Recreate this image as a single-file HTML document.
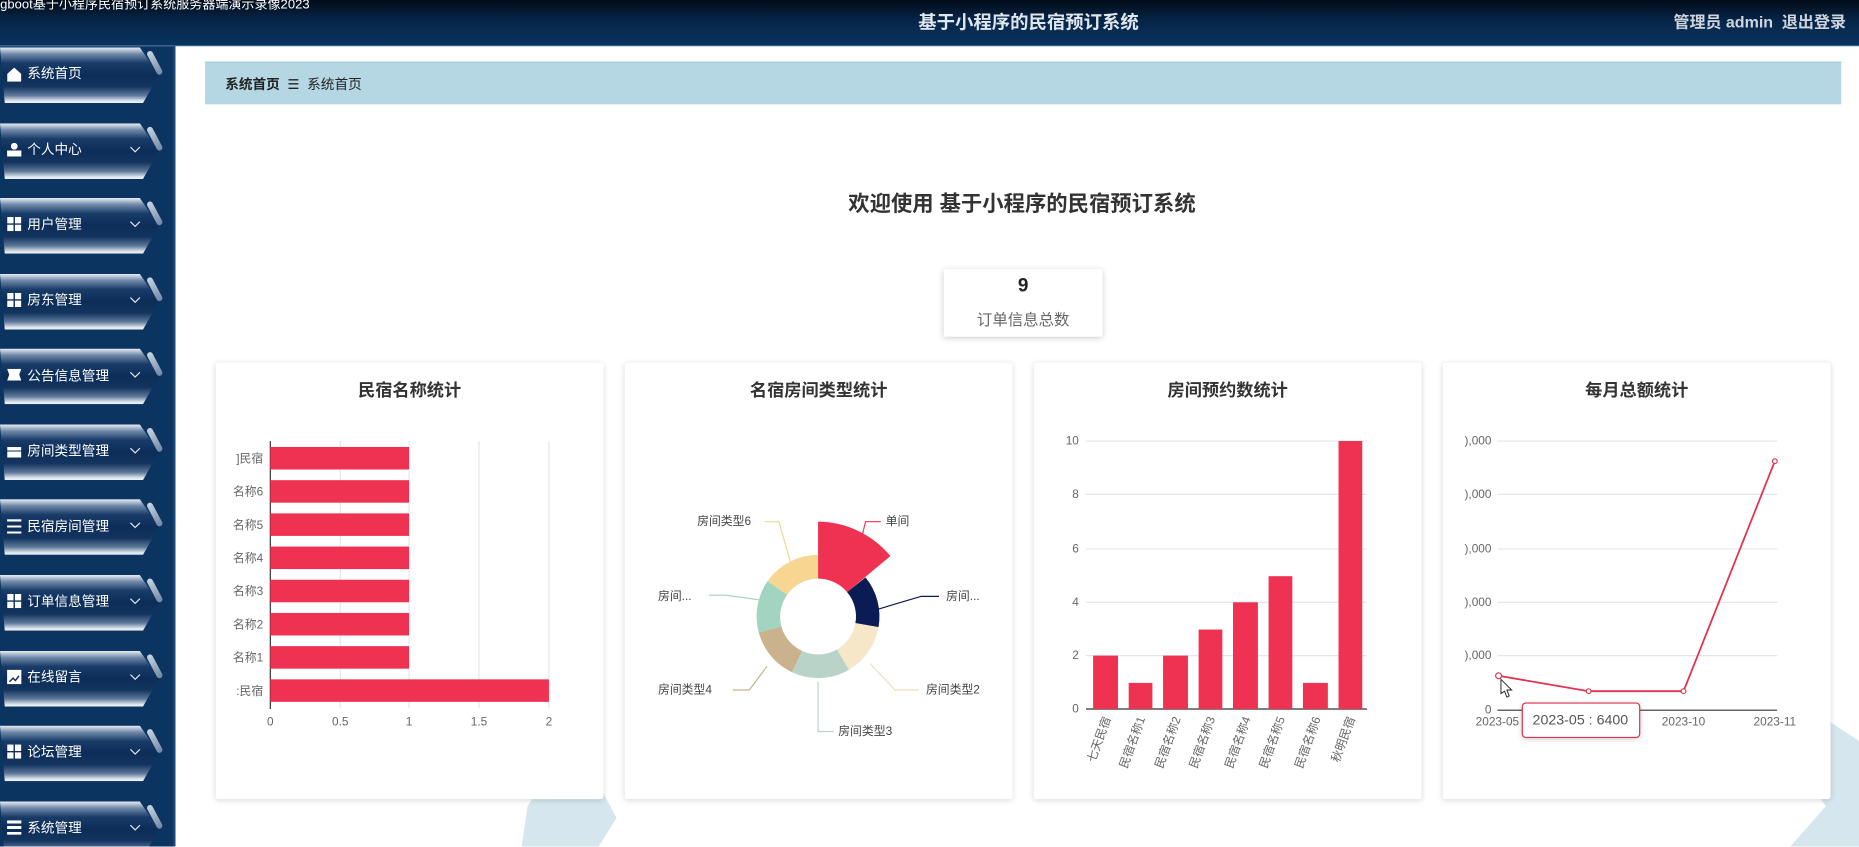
<!DOCTYPE html>
<html><head><meta charset="utf-8">
<style>
*{margin:0;padding:0;box-sizing:border-box}
html,body{width:1859px;height:846px;overflow:hidden;background:#fff}
body{font-family:"Liberation Sans","Noto Sans CJK SC",sans-serif}
#w{position:absolute;left:0;top:0;width:1568px;height:714px;transform:scale(1.18559);transform-origin:0 0;overflow:hidden;background:#fff}
.hdr{position:absolute;left:0;top:0;width:1568px;height:39px;background:linear-gradient(#020c18 0%,#062548 45%,#0a3360 100%);border-bottom:1px solid #2b5a8a}
.side{position:absolute;left:0;top:39px;width:148px;height:675px;background:#0b3460}
.it{position:absolute;left:0;width:134px;height:47px;clip-path:polygon(0 0,88% 0,100% 50%,90% 100%,3% 100%);background:linear-gradient(#e8eef4 0%,#6f88a8 12%,#183b68 28%,#0c2d58 50%,#12345f 70%,#5d7899 86%,#dfe6ee 96%,#f0f3f7 100%)}
.st{position:absolute;left:128px;width:5px;height:22px;border-radius:3px;background:linear-gradient(#c9d5e2,#6f88a6);transform:rotate(-28deg)}
.lb{position:absolute;left:23px;color:#fff;font-size:11.5px;line-height:14px;white-space:nowrap}
.ic{position:absolute;left:6px;width:12px;height:12px}
.g4{background:#fff;clip-path:polygon(0 0,45% 0,45% 45%,0 45%,0 55%,45% 55%,45% 100%,0 100%,0 0,100% 0,100% 100%,55% 100%,55% 55%,100% 55%,100% 45%,55% 45%,55% 0)}
.chev{position:absolute;left:110px;width:9px;height:6px}
.card{position:absolute;top:306px;width:327px;height:368px;background:#fff;box-shadow:0 1px 5px rgba(0,0,0,.15);border-radius:2px}
.ct{position:absolute;top:318px;width:327px;text-align:center;font-weight:bold;font-size:14.5px;color:#333}
</style></head><body><div id="w">
<svg style="position:absolute;left:0;top:0" width="1568" height="714">
<polygon points="445,680 470,640 500,652 520,690 505,714 440,714" fill="#d6e6ee"/>
<polygon points="1500,620 1530,600 1568,625 1568,714 1510,714 1540,680" fill="#d6e6ee"/>
</svg>
<div class="hdr">
<div style="position:absolute;left:-6px;top:-5px;color:#fff;font-size:11px;white-space:nowrap">ngboot基于小程序民宿预订系统服务器端演示录像2023</div>
<div style="position:absolute;left:0;width:1735px;text-align:center;top:7px;color:#dfe6ee;font-weight:bold;font-size:15.5px">基于小程序的民宿预订系统</div>
<div style="position:absolute;right:11px;top:7px;color:#cfd5dc;font-weight:bold;font-size:13.5px;white-space:nowrap">管理员 admin&nbsp; 退出登录</div>
</div>
<div class="side">
<div style="position:absolute;left:146px;top:0;width:2px;height:675px;background:#1a4878"></div>
</div>
<div style="position:absolute;left:0;top:0">
<div class="it" style="top:40px"></div><div class="st" style="top:42px"></div><div class="ic" style="top:57px;background:#fff;clip-path:polygon(50% 0,100% 45%,100% 100%,0 100%,0 45%)"></div><div class="lb" style="top:56px">系统首页</div>
<div class="it" style="top:104px"></div><div class="st" style="top:106px"></div><div class="ic" style="top:120px;background:radial-gradient(circle at 50% 28%,#fff 0 26%,transparent 28%),linear-gradient(transparent 58%,#fff 58%)"></div><div class="lb" style="top:120px">个人中心</div>
<div class="it" style="top:167px"></div><div class="st" style="top:169px"></div><div class="ic g4" style="top:183px"></div><div class="lb" style="top:183px">用户管理</div>
<div class="it" style="top:231px"></div><div class="st" style="top:233px"></div><div class="ic g4" style="top:247px"></div><div class="lb" style="top:247px">房东管理</div>
<div class="it" style="top:294px"></div><div class="st" style="top:296px"></div><div class="ic" style="top:311px;height:10px;background:#fff;clip-path:polygon(0 0,100% 0,85% 50%,100% 100%,0 100%,15% 50%)"></div><div class="lb" style="top:311px">公告信息管理</div>
<div class="it" style="top:358px"></div><div class="st" style="top:360px"></div><div class="ic" style="top:374px;background:linear-gradient(transparent 25%,#fff 25% 50%,transparent 50% 58%,#fff 58%);clip-path:polygon(30% 0,70% 0,70% 25%,100% 25%,100% 100%,0 100%,0 25%,30% 25%)"></div><div class="lb" style="top:374px">房间类型管理</div>
<div class="it" style="top:421px"></div><div class="st" style="top:423px"></div><div class="ic" style="top:438px;background:linear-gradient(#fff 0 15%,transparent 15% 42%,#fff 42% 57%,transparent 57% 85%,#fff 85%)"></div><div class="lb" style="top:438px">民宿房间管理</div>
<div class="it" style="top:485px"></div><div class="st" style="top:487px"></div><div class="ic g4" style="top:501px"></div><div class="lb" style="top:501px">订单信息管理</div>
<div class="it" style="top:549px"></div><div class="st" style="top:551px"></div><div class="ic" style="top:565px;background:#fff"><svg width="12" height="12"><polyline points="2,9 5,6 7,8 10,4" fill="none" stroke="#0c2d58" stroke-width="1.2"/></svg></div><div class="lb" style="top:565px">在线留言</div>
<div class="it" style="top:612px"></div><div class="st" style="top:614px"></div><div class="ic g4" style="top:628px"></div><div class="lb" style="top:628px">论坛管理</div>
<div class="it" style="top:676px"></div><div class="st" style="top:678px"></div><div class="ic" style="top:692px;background:linear-gradient(#fff 0 20%,transparent 20% 40%,#fff 40% 60%,transparent 60% 80%,#fff 80%)"></div><div class="lb" style="top:692px">系统管理</div>
<svg style="position:absolute;left:0;top:0" width="148" height="714" fill="none" stroke="#dfe7f0" stroke-width="1">
<polyline points="110,124 114,128 118,124"/><polyline points="110,187 114,191 118,187"/><polyline points="110,251 114,255 118,251"/><polyline points="110,314 114,318 118,314"/><polyline points="110,378 114,382 118,378"/><polyline points="110,441 114,445 118,441"/><polyline points="110,505 114,509 118,505"/><polyline points="110,569 114,573 118,569"/><polyline points="110,632 114,636 118,632"/><polyline points="110,696 114,700 118,696"/>
</svg>
</div>
<div style="position:absolute;left:173px;top:52px;width:1380px;height:36px;background:#b4d7e3;border-top:1px solid #a3cbd9"></div>
<div style="position:absolute;left:190px;top:63px;font-size:11.5px;color:#222;white-space:nowrap"><b>系统首页</b>&nbsp; ☰ &nbsp;系统首页</div>
<div style="position:absolute;left:148px;width:1428px;text-align:center;top:158px;font-size:18px;font-weight:bold;color:#333">欢迎使用 基于小程序的民宿预订系统</div>
<div style="position:absolute;left:796px;top:227px;width:134px;height:57px;background:#fff;box-shadow:0 1px 5px rgba(0,0,0,.2);text-align:center">
<div style="font-weight:bold;font-size:16px;color:#222;margin-top:6px">9</div>
<div style="font-size:13px;color:#666;margin-top:8px">订单信息总数</div></div>
<div class="card" style="left:182px"></div><div class="card" style="left:527px"></div><div class="card" style="left:872px"></div><div class="card" style="left:1217px"></div>
<div class="ct" style="left:182px">民宿名称统计</div><div class="ct" style="left:527px">名宿房间类型统计</div><div class="ct" style="left:872px">房间预约数统计</div><div class="ct" style="left:1217px">每月总额统计</div>
<svg style="position:absolute;left:0;top:0" width="1568" height="714" font-family="Liberation Sans,Noto Sans CJK SC,sans-serif" font-size="10" fill="#666">
<g stroke="#e0e6ee"><line x1="287" y1="372" x2="287" y2="597"/><line x1="345" y1="372" x2="345" y2="597"/><line x1="404" y1="372" x2="404" y2="597"/><line x1="463" y1="372" x2="463" y2="597"/></g>
<line x1="228" y1="372" x2="228" y2="598" stroke="#333"/>
<g fill="#ef3251"><rect x="228" y="377" width="117" height="19"/><rect x="228" y="405" width="117" height="19"/><rect x="228" y="433" width="117" height="19"/><rect x="228" y="461" width="117" height="19"/><rect x="228" y="489" width="117" height="19"/><rect x="228" y="517" width="117" height="19"/><rect x="228" y="545" width="117" height="19"/><rect x="228" y="573" width="235" height="19"/></g>
<g text-anchor="end"><text x="222" y="390">]民宿</text><text x="222" y="418">名称6</text><text x="222" y="446">名称5</text><text x="222" y="474">名称4</text><text x="222" y="502">名称3</text><text x="222" y="530">名称2</text><text x="222" y="558">名称1</text><text x="222" y="586">:民宿</text></g>
<g text-anchor="middle"><text x="228" y="612">0</text><text x="287" y="612">0.5</text><text x="345" y="612">1</text><text x="404" y="612">1.5</text><text x="463" y="612">2</text></g>
<g transform="translate(690,520)">
<path d="M0,-80 A80,80 0 0 1 61,-51 L24.5,-20.6 A32,32 0 0 0 0,-32Z" fill="#ef3251"/>
<path d="M40,-33 A52,52 0 0 1 51,9 L31.5,5.6 A32,32 0 0 0 24.5,-20.6Z" fill="#0b1c54"/>
<path d="M51,9 A52,52 0 0 1 26,45 L16,27.7 A32,32 0 0 0 31.5,5.6Z" fill="#f6e7c9"/>
<path d="M26,45 A52,52 0 0 1 -22,47 L-13.5,29 A32,32 0 0 0 16,27.7Z" fill="#b9d3c9"/>
<path d="M-22,47 A52,52 0 0 1 -50,13.5 L-31,8.3 A32,32 0 0 0 -13.5,29Z" fill="#c9b28c"/>
<path d="M-50,13.5 A52,52 0 0 1 -42.6,-29.8 L-26,-18.4 A32,32 0 0 0 -31,8.3Z" fill="#a1d4c1"/>
<path d="M-42.6,-29.8 A52,52 0 0 1 0,-52 L0,-32 A32,32 0 0 0 -26,-18.4Z" fill="#f6d690"/>
</g>
<g fill="none" stroke-width="1"><polyline points="724,466 730,440 743,440" stroke="#ef3251"/><polyline points="740,514 777,503 792,503" stroke="#0b1c54"/><polyline points="734,560 755,582 775,582" stroke="#f0e0bc"/><polyline points="690,575 690,617 703,617" stroke="#b9d3c9"/><polyline points="647,562 632,582 618,582" stroke="#c9b28c"/><polyline points="641,506 612,502 598,502" stroke="#a1d4c1"/><polyline points="667,475 657,440 645,440" stroke="#f6d690"/></g>
<g fill="#444"><text x="747" y="443">单间</text><text x="798" y="506">房间...</text><text x="781" y="585">房间类型2</text><text x="707" y="620">房间类型3</text><text x="555" y="585">房间类型4</text><text x="555" y="506">房间...</text><text x="588" y="443">房间类型6</text></g>
<g stroke="#e3e6ef"><line x1="916" y1="372" x2="1153" y2="372"/><line x1="916" y1="417" x2="1153" y2="417"/><line x1="916" y1="463" x2="1153" y2="463"/><line x1="916" y1="508" x2="1153" y2="508"/><line x1="916" y1="553" x2="1153" y2="553"/></g>
<line x1="916" y1="598" x2="1153" y2="598" stroke="#333"/>
<g fill="#ef3251"><rect x="922" y="553" width="21" height="45"/><rect x="952" y="576" width="20" height="22"/><rect x="981" y="553" width="21" height="45"/><rect x="1011" y="531" width="20" height="67"/><rect x="1040" y="508" width="21" height="90"/><rect x="1070" y="486" width="20" height="112"/><rect x="1099" y="576" width="21" height="22"/><rect x="1129" y="372" width="20" height="226"/></g>
<g text-anchor="end"><text x="910" y="375">10</text><text x="910" y="420">8</text><text x="910" y="466">6</text><text x="910" y="511">4</text><text x="910" y="556">2</text><text x="910" y="601">0</text></g>
<g text-anchor="end"><text transform="translate(937,606) rotate(-70)">七天民宿</text><text transform="translate(966,606) rotate(-70)">民宿名称1</text><text transform="translate(996,606) rotate(-70)">民宿名称2</text><text transform="translate(1025,606) rotate(-70)">民宿名称3</text><text transform="translate(1055,606) rotate(-70)">民宿名称4</text><text transform="translate(1084,606) rotate(-70)">民宿名称5</text><text transform="translate(1114,606) rotate(-70)">民宿名称6</text><text transform="translate(1143,606) rotate(-70)">秋明民宿</text></g>
<g stroke="#e3e6ef"><line x1="1263" y1="372" x2="1499" y2="372"/><line x1="1263" y1="417" x2="1499" y2="417"/><line x1="1263" y1="463" x2="1499" y2="463"/><line x1="1263" y1="508" x2="1499" y2="508"/><line x1="1263" y1="553" x2="1499" y2="553"/></g>
<line x1="1263" y1="599" x2="1499" y2="599" stroke="#333"/>
<g text-anchor="end"><text x="1258" y="375">),000</text><text x="1258" y="420">),000</text><text x="1258" y="466">),000</text><text x="1258" y="511">),000</text><text x="1258" y="556">),000</text><text x="1258" y="602">0</text></g>
<polyline points="1264,570 1340,583 1420,583 1497,389" fill="none" stroke="#e2324f" stroke-width="1.5"/>
<g fill="#fff" stroke="#e2324f"><circle cx="1264" cy="570" r="2.5"/><circle cx="1340" cy="583" r="2"/><circle cx="1420" cy="583" r="2"/><circle cx="1497" cy="389" r="2"/></g>
<g text-anchor="middle"><text x="1263" y="612">2023-05</text><text x="1420" y="612">2023-10</text><text x="1497" y="612">2023-11</text></g>
<rect x="1284" y="593" width="99" height="29" rx="3" fill="#fff" stroke="#e2324f" style="filter:drop-shadow(0 1px 2px rgba(0,0,0,.2))"/>
<text x="1333" y="611" text-anchor="middle" font-size="12" fill="#555">2023-05 : 6400</text>
<path d="M1266,573 l0,12 l3,-2 l2,5 l2,-1 l-2,-5 l4,0z" fill="#fff" stroke="#222" stroke-width="0.8"/>
</svg>
</div></body></html>
